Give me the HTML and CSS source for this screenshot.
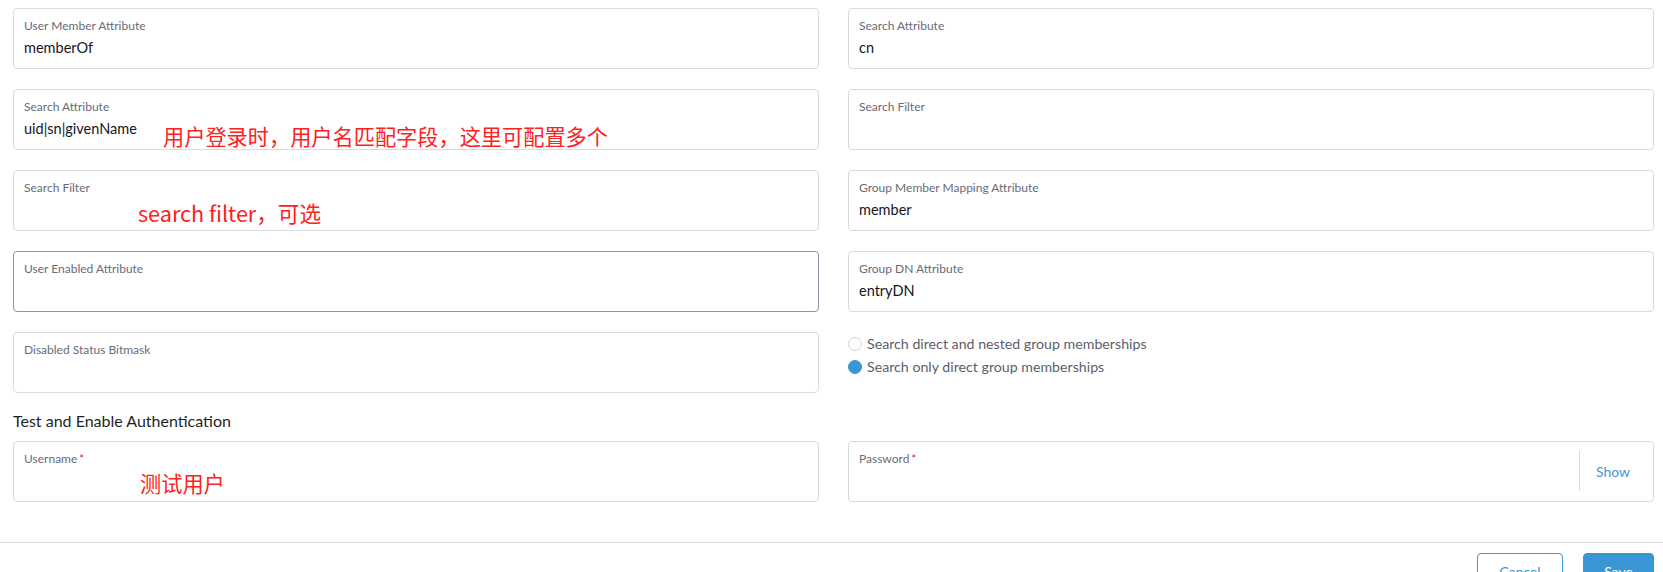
FILE: index.html
```html
<!DOCTYPE html>
<html lang="en">
<head>
<meta charset="utf-8">
<title>LDAP settings</title>
<link rel="stylesheet" href="styles.css">
</head>
<body>
<div class="page">
  <div class="grid">
    <div class="col">
      <div class="field"><div class="label">User Member Attribute</div><div class="value">memberOf</div></div>
      <div class="field"><div class="label">Search Attribute</div><div class="value">uid|sn|givenName</div><span class="note note-attr">用户登录时，用户名匹配字段，这里可配置多个</span></div>
      <div class="field"><div class="label">Search Filter</div><div class="value"></div><span class="note note-filter">search filter，可选</span></div>
      <div class="field focused"><div class="label">User Enabled Attribute</div><div class="value"></div></div>
      <div class="field"><div class="label">Disabled Status Bitmask</div><div class="value"></div></div>
    </div>
    <div class="col">
      <div class="field"><div class="label">Search Attribute</div><div class="value">cn</div></div>
      <div class="field"><div class="label">Search Filter</div><div class="value"></div></div>
      <div class="field"><div class="label">Group Member Mapping Attribute</div><div class="value">member</div></div>
      <div class="field"><div class="label">Group DN Attribute</div><div class="value">entryDN</div></div>
      <div class="radios">
        <div class="radio"><span class="dot"></span>Search direct and nested group memberships</div>
        <div class="radio"><span class="dot on"></span>Search only direct group memberships</div>
      </div>
    </div>
  </div>
  <h3 class="section">Test and Enable Authentication</h3>
  <div class="grid">
    <div class="field"><div class="label">Username<span class="req">*</span></div><div class="value"></div><span class="note note-user">测试用户</span></div>
    <div class="field pw">
      <div class="pw-main"><div class="label">Password<span class="req">*</span></div><div class="value"></div></div>
      <div class="show">Show</div>
    </div>
  </div>
</div>
<div class="footer">
  <button class="btn cancel">Cancel</button>
  <button class="btn save">Save</button>
</div>
</body>
</html>
```

FILE: styles.css
```css
html, body {
  margin: 0;
  padding: 0;
  background: #fff;
  font-family: Lato, "Noto Sans", "Noto Sans CJK SC", sans-serif;
  color: #1d1d24;
  overflow: hidden;
}
.page {
  padding: 8px 9px 0 13px;
}
.grid {
  display: grid;
  grid-template-columns: 1fr 1fr;
  column-gap: 29px;
}
.col {
  display: flex;
  flex-direction: column;
  gap: 20px;
}
.field {
  position: relative;
  height: 61px;
  box-sizing: border-box;
  border: 1px solid #dadae3;
  border-radius: 4px;
  padding: 10px 10px 0 10px;
  background: #fff;
}
.field.focused {
  border-color: #8c92ab;
}
.label {
  font-size: 12px;
  line-height: 14px;
  color: #686c78;
  height: 14px;
}
.req {
  color: #e02020;
  margin-left: 2px;
  font-size: 11px;
  vertical-align: top;
}
.value {
  margin-top: 6px;
  font-size: 14.5px;
  line-height: 18px;
  height: 18px;
  color: #15151c;
}
.note {
  position: absolute;
  font-family: "Noto Sans CJK SC", "Noto Sans", sans-serif;
  color: #ff2020;
  font-size: 21.2px;
  line-height: 24px;
  white-space: nowrap;
}
.note-attr { left: 149px; top: 34px; }
.note-filter { left: 124px; top: 30px; font-size: 21.6px; }
.note-user { left: 126px; top: 29px; }
.radios {
  display: flex;
  flex-direction: column;
  gap: 5px;
  padding-top: 3px;
}
.radio {
  display: flex;
  align-items: center;
  font-size: 14.2px;
  line-height: 18px;
  color: #5b5e6b;
}
.dot {
  width: 12px;
  height: 12px;
  border-radius: 50%;
  border: 1px solid #d4d4dc;
  margin-right: 5px;
  box-sizing: content-box;
}
.dot.on {
  background: #3b96d6;
  border-color: #3b96d6;
}
.section {
  margin: 18px 0 10px 0;
  font-size: 16px;
  line-height: 20px;
  font-weight: 400;
  color: #1f1f26;
}
.pw {
  display: flex;
  padding: 0;
}
.pw-main {
  flex: 1;
  padding: 10px 10px 0 10px;
}
.show {
  width: 74px;
  margin: 9px 0 10px 0;
  border-left: 1px solid #d8d8e0;
  box-sizing: border-box;
  padding-left: 16px;
  display: flex;
  align-items: center;
  font-size: 14px;
  color: #4b93d2;
}
.footer {
  margin-top: 40px;
  border-top: 1px solid #dadae3;
  padding: 10px 9px 0 0;
  display: flex;
  justify-content: flex-end;
  gap: 20px;
}
.btn {
  height: 36px;
  border-radius: 4px;
  font-family: Lato, "Noto Sans", sans-serif;
  font-size: 14px;
  padding: 0;
}
.cancel {
  width: 86px;
  background: #fff;
  border: 1px solid #3b96d6;
  color: #3b96d6;
}
.save {
  width: 71px;
  background: #3b96d6;
  border: 1px solid #3b96d6;
  color: #fff;
}
```
